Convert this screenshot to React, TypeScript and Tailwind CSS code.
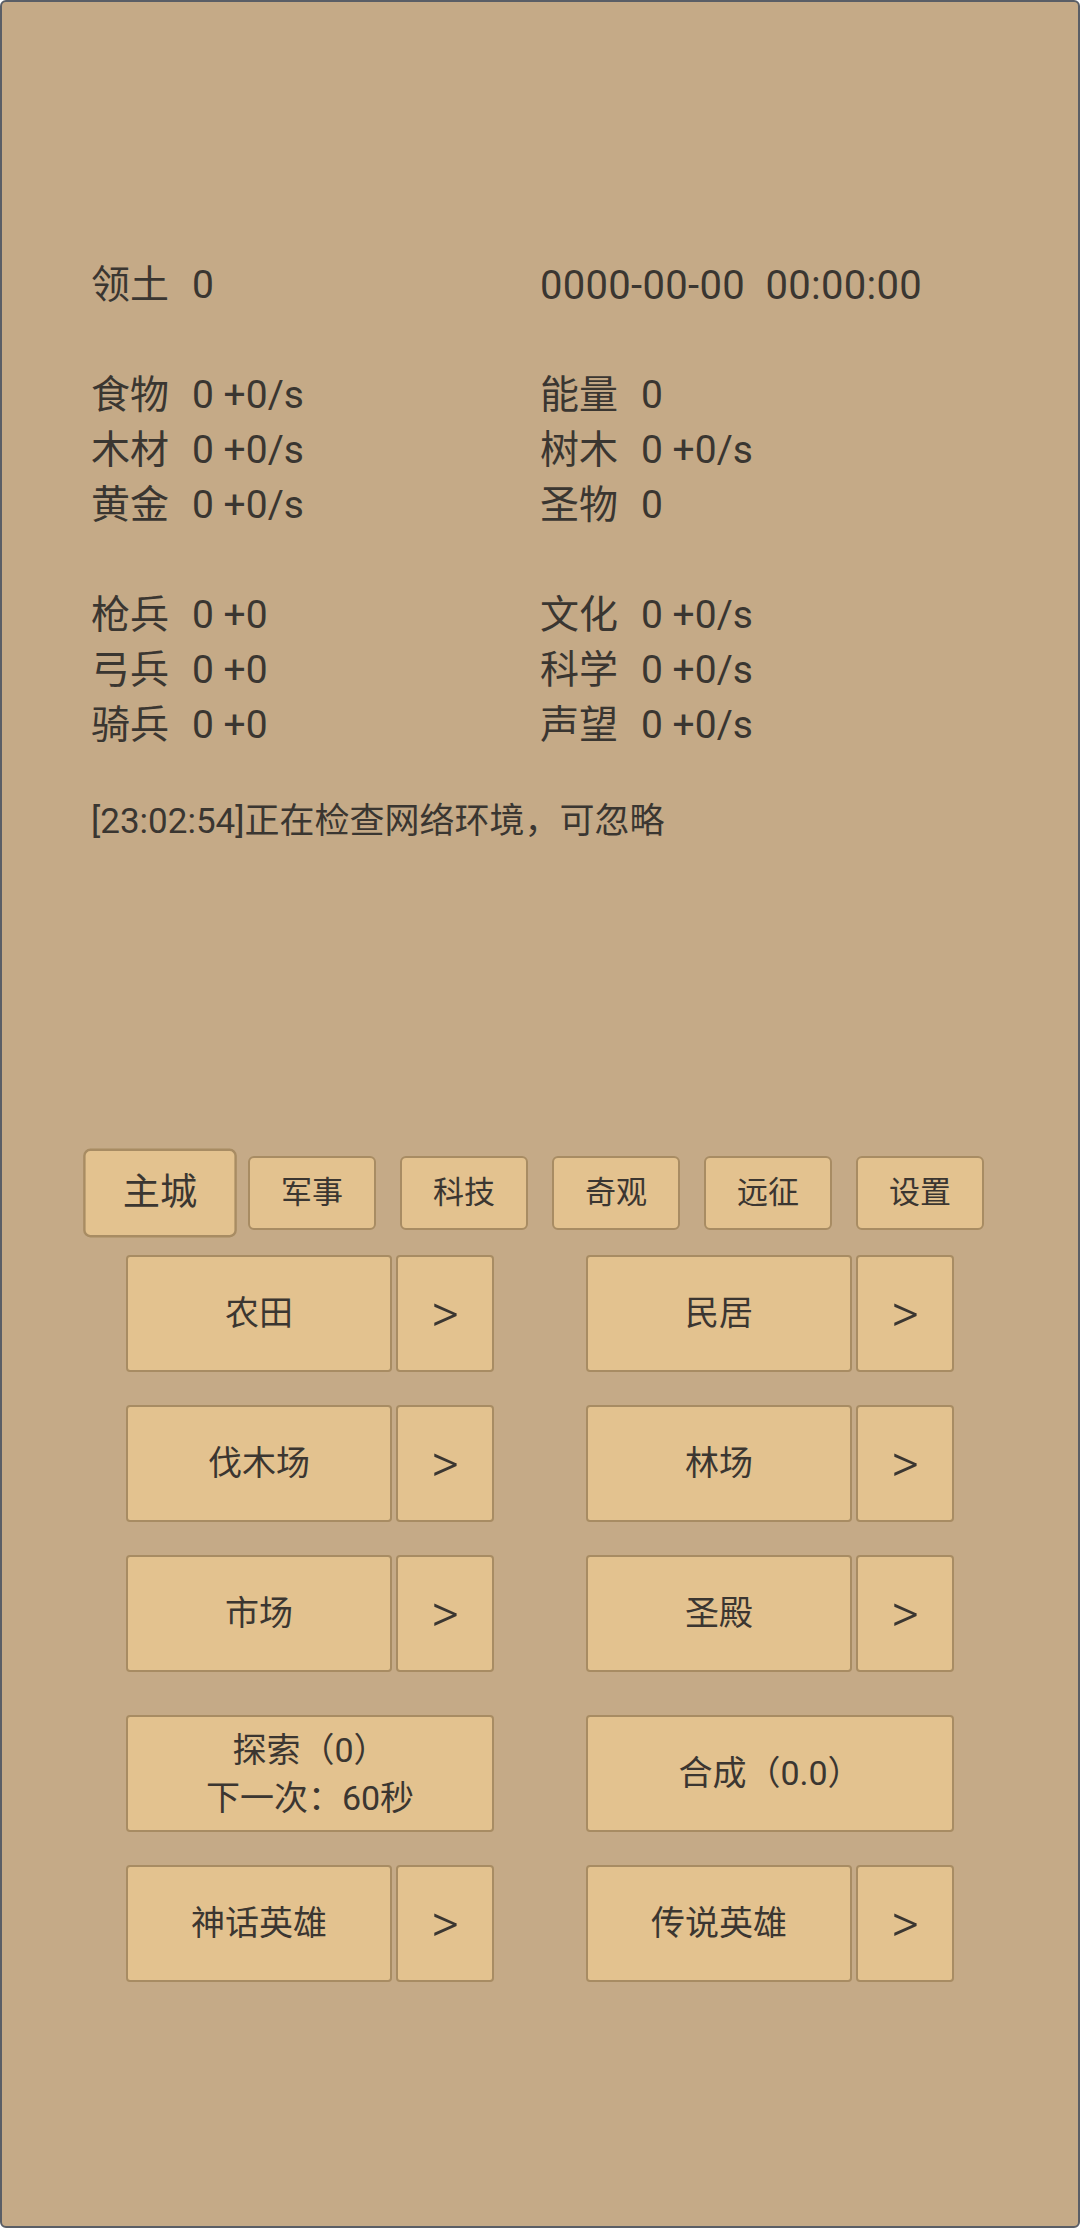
import React from 'react';

const stats: [string, string, string, string][] = [
    ['领土', '0', '', '0000-00-00  00:00:00'],
    ['', '', '', ''],
    ['食物', '0 +0/s', '能量', '0'],
    ['木材', '0 +0/s', '树木', '0 +0/s'],
    ['黄金', '0 +0/s', '圣物', '0'],
    ['', '', '', ''],
    ['枪兵', '0 +0', '文化', '0 +0/s'],
    ['弓兵', '0 +0', '科学', '0 +0/s'],
    ['骑兵', '0 +0', '声望', '0 +0/s'],
];

const tabs = ['主城', '军事', '科技', '奇观', '远征', '设置'];

const btn = 'bg-[#e3c28f] border-2 border-[#a88c63] rounded-[4px] flex items-center justify-center text-[#3b3631]';

const Stat: React.FC<{ label: string; value: string }> = ({ label, value }) => {
    if (!label) {
        return <div className="whitespace-pre text-[40px] tracking-[0.3px]">{value}</div>;
    }
    return (
        <div className="flex whitespace-pre">
            <span className="w-[101px] shrink-0">{label}</span>
            <span>{value}</span>
        </div>
    );
};

const BuildButton: React.FC<{ name: string }> = ({ name }) => (
    <div className="flex gap-[4px] h-[117px]">
        <button className={`${btn} w-[266px] text-[34px]`}>{name}</button>
        <button className={`${btn} w-[98px] text-[54px] font-light`}>&gt;</button>
    </div>
);

export default function App() {
    return (
        <div className="min-h-[2228px] bg-[#c5aa87] border-2 border-[#5a5e66] rounded-[6px] font-['Roboto','Noto_Sans_CJK_SC',sans-serif] text-[#3a3631] overflow-hidden">
            <div className="pt-[256px] pl-[89px] text-[39px] leading-[55px]">
                {stats.map((row, i) => (
                    <div key={i} className="grid grid-cols-[449px_1fr] h-[55px]">
                        <Stat label={row[0]} value={row[1]} />
                        <Stat label={row[2]} value={row[3]} />
                    </div>
                ))}
                <div className="mt-[45px] text-[35px] leading-[48px]">[23:02:54]正在检查网络环境，可忽略</div>
            </div>

            <div className="mt-[310px] flex justify-center gap-[24px]">
                {tabs.map((t, i) => (
                    <button
                        key={t}
                        className={`${btn} w-[128px] h-[74px] rounded-[6px] text-[31px] ${i === 0 ? 'scale-[1.2]' : ''}`}
                    >
                        {t}
                    </button>
                ))}
            </div>

            <div className="w-[828px] mx-auto mt-[25px] flex flex-col">
                <div className="grid grid-cols-2 gap-x-[92px]">
                    <BuildButton name="农田" />
                    <BuildButton name="民居" />
                </div>
                <div className="grid grid-cols-2 gap-x-[92px] mt-[33px]">
                    <BuildButton name="伐木场" />
                    <BuildButton name="林场" />
                </div>
                <div className="grid grid-cols-2 gap-x-[92px] mt-[33px]">
                    <BuildButton name="市场" />
                    <BuildButton name="圣殿" />
                </div>
                <div className="grid grid-cols-2 gap-x-[92px] mt-[43px]">
                    <button className={`${btn} w-[368px] h-[117px] flex-col text-[34px] leading-[48px]`}>
                        <span>探索（0）</span>
                        <span>下一次：60秒</span>
                    </button>
                    <button className={`${btn} w-[368px] h-[117px] text-[34px]`}>合成（0.0）</button>
                </div>
                <div className="grid grid-cols-2 gap-x-[92px] mt-[33px]">
                    <BuildButton name="神话英雄" />
                    <BuildButton name="传说英雄" />
                </div>
            </div>
        </div>
    );
}
